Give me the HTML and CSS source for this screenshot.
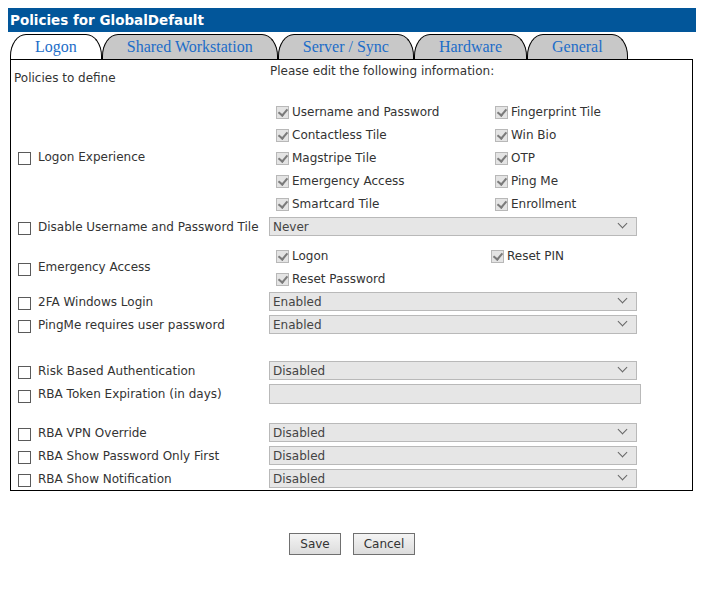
FILE: index.html
```html
<!DOCTYPE html>
<html>
<head>
<meta charset="utf-8">
<title>Policies for GlobalDefault</title>
<link rel="stylesheet" href="styles.css">
</head>
<body>
<div class="title">Policies for GlobalDefault</div>
<div class="tabs">
  <div class="tab active">Logon</div>
  <div class="tab">Shared Workstation</div>
  <div class="tab">Server / Sync</div>
  <div class="tab">Hardware</div>
  <div class="tab">General</div>
</div>
<div class="panel">
  <div class="head">
    <div class="head-l">Policies to define</div>
    <div class="head-r">Please edit the following information:</div>
  </div>

  <div class="row group-logon">
    <label class="pol"><input type="checkbox" class="cb">Logon Experience</label>
    <div class="opts opts-a">
      <label class="opt"><input type="checkbox" class="ocb" checked disabled>Username and Password</label>
      <label class="opt"><input type="checkbox" class="ocb" checked disabled>Fingerprint Tile</label>
      <label class="opt"><input type="checkbox" class="ocb" checked disabled>Contactless Tile</label>
      <label class="opt"><input type="checkbox" class="ocb" checked disabled>Win Bio</label>
      <label class="opt"><input type="checkbox" class="ocb" checked disabled>Magstripe Tile</label>
      <label class="opt"><input type="checkbox" class="ocb" checked disabled>OTP</label>
      <label class="opt"><input type="checkbox" class="ocb" checked disabled>Emergency Access</label>
      <label class="opt"><input type="checkbox" class="ocb" checked disabled>Ping Me</label>
      <label class="opt"><input type="checkbox" class="ocb" checked disabled>Smartcard Tile</label>
      <label class="opt"><input type="checkbox" class="ocb" checked disabled>Enrollment</label>
    </div>
  </div>

  <div class="row">
    <label class="pol"><input type="checkbox" class="cb">Disable Username and Password Tile</label>
    <div class="sel"><select disabled><option>Never</option></select></div>
  </div>

  <div class="row group-emerg">
    <label class="pol"><input type="checkbox" class="cb">Emergency Access</label>
    <div class="opts opts-b">
      <label class="opt"><input type="checkbox" class="ocb" checked disabled>Logon</label>
      <label class="opt"><input type="checkbox" class="ocb" checked disabled>Reset PIN</label>
      <label class="opt"><input type="checkbox" class="ocb" checked disabled>Reset Password</label>
    </div>
  </div>

  <div class="row">
    <label class="pol"><input type="checkbox" class="cb">2FA Windows Login</label>
    <div class="sel"><select disabled><option>Enabled</option></select></div>
  </div>

  <div class="row">
    <label class="pol"><input type="checkbox" class="cb">PingMe requires user password</label>
    <div class="sel"><select disabled><option>Enabled</option></select></div>
  </div>

  <div class="row blank"></div>

  <div class="row">
    <label class="pol"><input type="checkbox" class="cb">Risk Based Authentication</label>
    <div class="sel"><select disabled><option>Disabled</option></select></div>
  </div>

  <div class="row row-token">
    <label class="pol"><input type="checkbox" class="cb">RBA Token Expiration (in days)</label>
    <input type="text" class="txt" disabled>
  </div>

  <div class="row row-vpn">
    <label class="pol"><input type="checkbox" class="cb">RBA VPN Override</label>
    <div class="sel"><select disabled><option>Disabled</option></select></div>
  </div>

  <div class="row">
    <label class="pol"><input type="checkbox" class="cb">RBA Show Password Only First</label>
    <div class="sel"><select disabled><option>Disabled</option></select></div>
  </div>

  <div class="row">
    <label class="pol"><input type="checkbox" class="cb">RBA Show Notification</label>
    <div class="sel"><select disabled><option>Disabled</option></select></div>
  </div>
</div>
<div class="actions">
  <button class="btn btn-save">Save</button>
  <button class="btn btn-cancel">Cancel</button>
</div>
</body>
</html>
```
FILE: styles.css
```css
body {
  margin: 8px;
  font-family: "DejaVu Sans", Verdana, sans-serif;
  font-size: 12px;
  color: #333;
  background: #fff;
}

.title {
  height: 24px;
  line-height: 24px;
  background: #02569a;
  color: #fff;
  font-weight: bold;
  font-size: 13.5px;
  padding-left: 2px;
}

.tabs {
  display: flex;
  margin: 2px 0 0 2px;
  height: 25px;
}

.tab {
  box-sizing: border-box;
  height: 25px;
  line-height: 24px;
  padding: 0 24px;
  border: 1px solid #000;
  border-bottom: none;
  border-radius: 16px 16px 0 0 / 22px 22px 0 0;
  background: #c8c8c8;
  color: #1c6dc8;
  font-family: "Liberation Serif", "Times New Roman", serif;
  font-size: 16px;
  white-space: nowrap;
}

.tab.active {
  background: #fff;
}

.panel {
  box-sizing: border-box;
  width: 683px;
  margin-left: 2px;
  border: 1px solid #000;
  padding-bottom: 0;
}

.head {
  display: grid;
  grid-template-columns: 258px 1fr;
  height: 40px;
  line-height: 14px;
}

.head-l {
  padding: 11px 0 0 3px;
}

.head-r {
  padding: 4px 0 0 1px;
}

.row {
  display: grid;
  grid-template-columns: 258px 1fr;
  align-items: center;
  height: 23px;
}

.group-logon {
  height: 115px;
}

.group-logon .pol {
  margin-bottom: 4px;
}

.group-logon .opts {
  margin-bottom: 2px;
}

.group-emerg {
  height: 46px;
  margin-top: 6px;
}

.group-emerg .pol {
  margin-bottom: 2px;
}

.group-emerg .opts {
  margin-bottom: 2px;
}

.row-token {
  height: 24px;
}

.row-vpn {
  margin-top: 15px;
}

.pol {
  display: flex;
  align-items: center;
  padding-left: 7px;
  white-space: nowrap;
  line-height: 14px;
}

.cb {
  appearance: none;
  -webkit-appearance: none;
  box-sizing: border-box;
  width: 13px;
  height: 13px;
  margin: 4px 7px 0 0;
  border: 1px solid #5a5a5a;
  background: #fff;
  flex: none;
}

.opts {
  display: grid;
  grid-auto-rows: 23px;
  padding-left: 7px;
}

.opts-a {
  grid-template-columns: 219px auto;
}

.opts-b {
  grid-template-columns: 215px auto;
}

.opt {
  display: flex;
  align-items: center;
  white-space: nowrap;
  line-height: 14px;
}

.ocb {
  appearance: none;
  -webkit-appearance: none;
  box-sizing: border-box;
  position: relative;
  width: 13px;
  height: 13px;
  margin: 2px 3px 0 0;
  border: 1px solid #b8b8b8;
  background: #e4e4e4;
  flex: none;
}

.ocb:checked::after {
  content: "";
  position: absolute;
  left: 3px;
  top: 0px;
  width: 4px;
  height: 7px;
  border-right: 2px solid #7b7b7b;
  border-bottom: 2px solid #7b7b7b;
  transform: rotate(40deg);
}

.sel {
  position: relative;
  width: 368px;
  height: 19px;
}

.sel select {
  appearance: none;
  -webkit-appearance: none;
  box-sizing: border-box;
  display: block;
  width: 368px;
  height: 19px;
  margin: 0;
  padding: 0 0 0 3px;
  border: 1px solid #b9b9b9;
  border-radius: 0;
  background: #e6e6e6;
  color: #444;
  font-family: "DejaVu Sans", Verdana, sans-serif;
  font-size: 12px;
  opacity: 1;
}

.sel::after {
  content: "";
  position: absolute;
  right: 11px;
  top: 3px;
  width: 6px;
  height: 6px;
  border-right: 1.5px solid #666;
  border-bottom: 1.5px solid #666;
  transform: rotate(45deg);
}

.txt {
  box-sizing: border-box;
  width: 372px;
  height: 20px;
  margin: 0;
  border: 1px solid #b9b9b9;
  background: #e6e6e6;
}

.actions {
  display: flex;
  justify-content: center;
  gap: 12px;
  margin-top: 42px;
}

.btn {
  box-sizing: border-box;
  height: 22px;
  margin: 0;
  padding: 0;
  border: 1px solid #707070;
  border-radius: 0;
  background: linear-gradient(#f4f4f4, #dcdcdc);
  color: #333;
  font-family: "DejaVu Sans", Verdana, sans-serif;
  font-size: 12px;
}

.btn-save {
  width: 52px;
}

.btn-cancel {
  width: 62px;
}
```
